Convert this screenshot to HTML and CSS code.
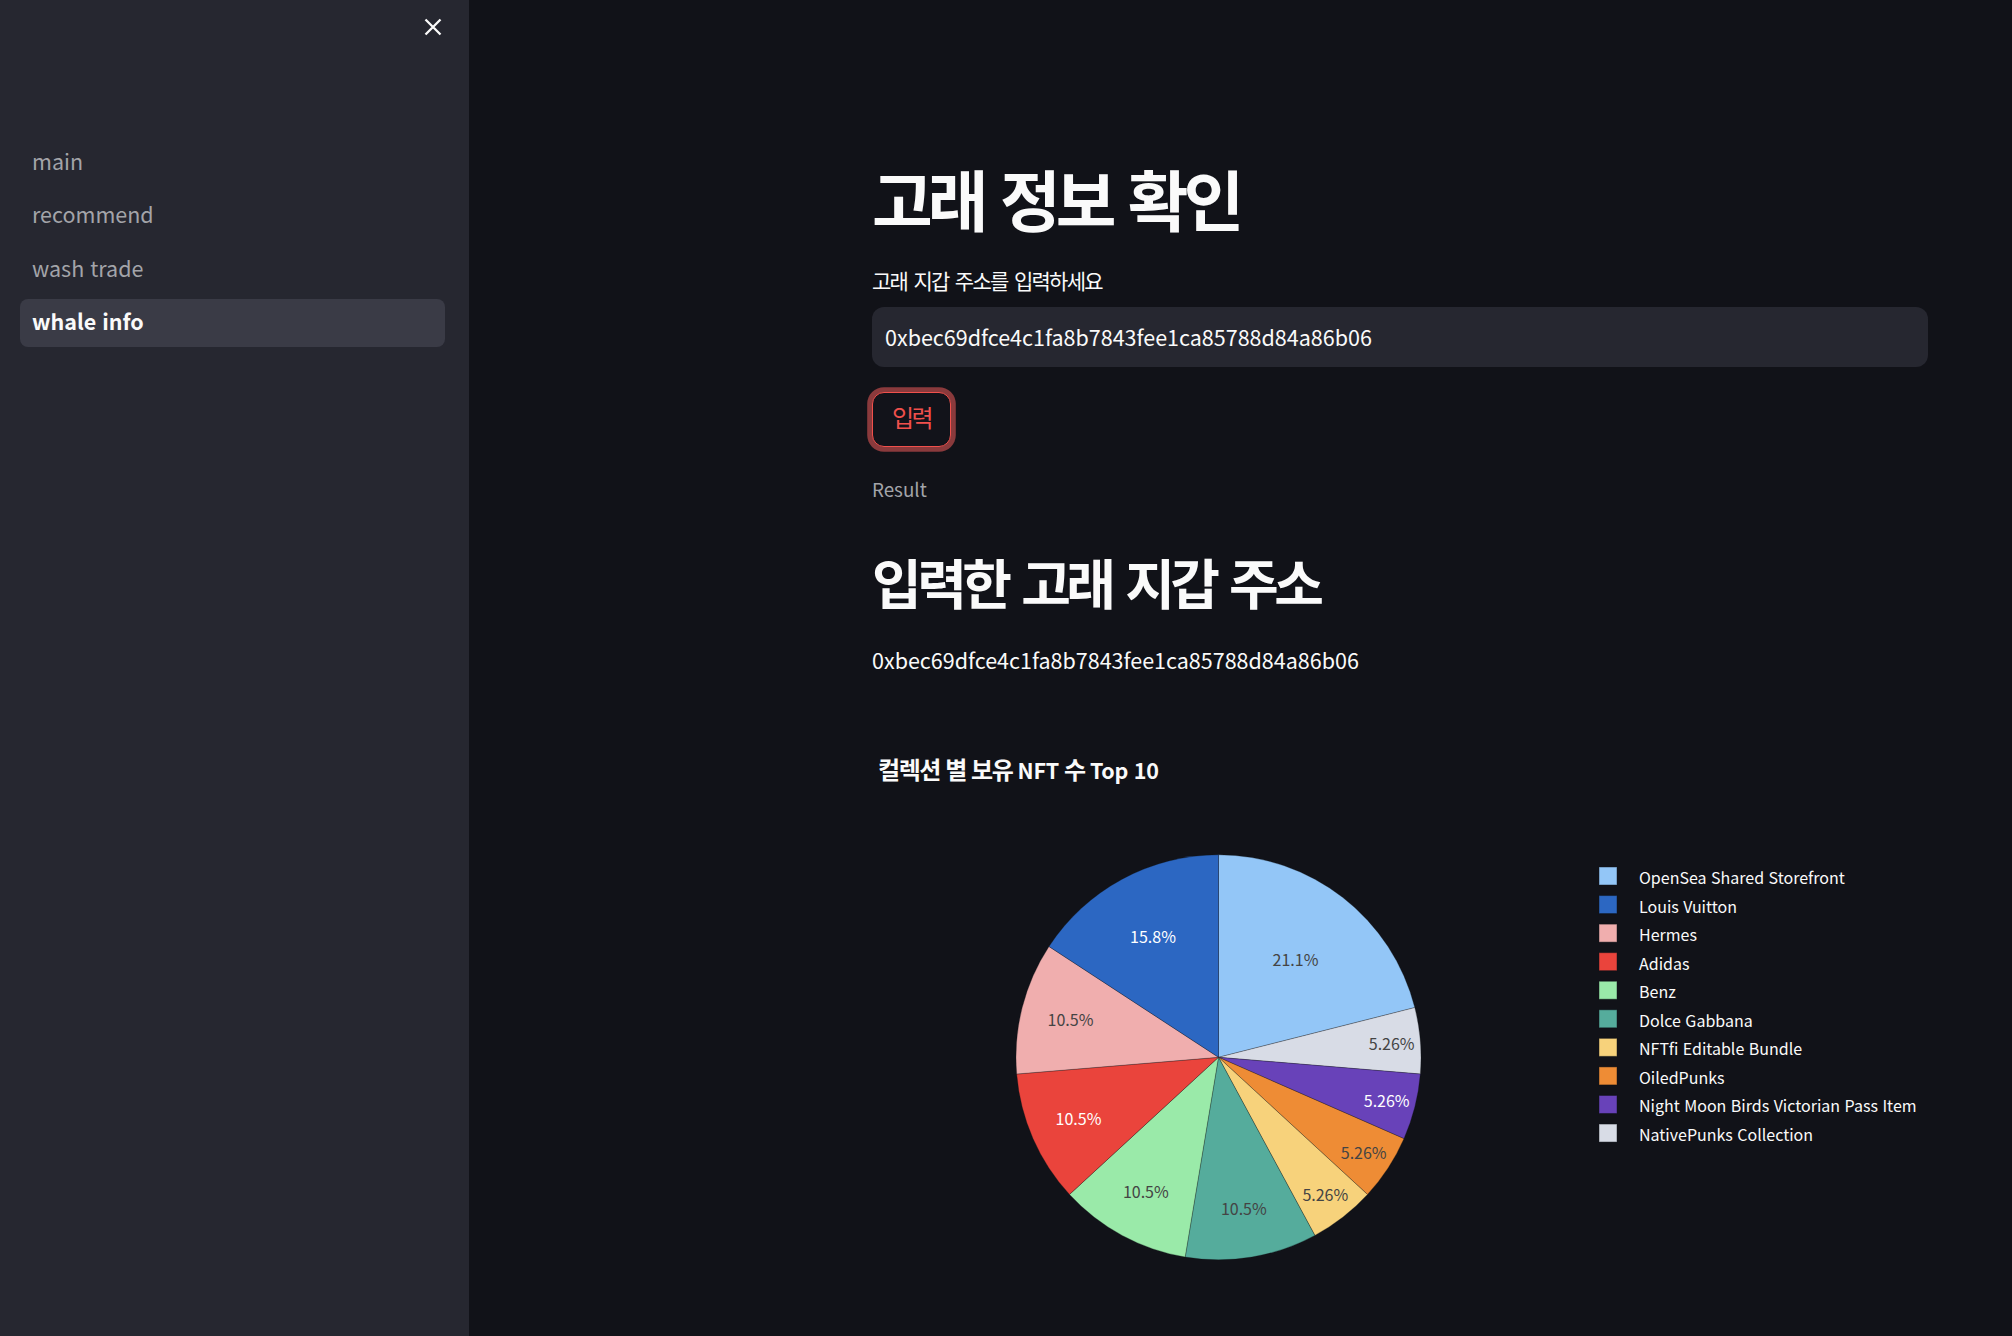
FILE: index.html
```html
<!DOCTYPE html>
<html lang="ko">
<head>
<meta charset="utf-8">
<title>whale info</title>
<link rel="stylesheet" href="styles.css">
</head>
<body>
<div class="app">
  <aside class="sidebar">
    <div class="sb-header">
      <button class="close-btn" aria-label="Close sidebar">
        <svg width="18" height="18" viewBox="0 0 18 18"><path d="M1.5 1.5 L16.5 16.5 M16.5 1.5 L1.5 16.5" stroke="#fafafa" stroke-width="2.3" fill="none"/></svg>
      </button>
    </div>
    <nav class="nav">
      <a class="nav-item">main</a>
      <a class="nav-item">recommend</a>
      <a class="nav-item">wash trade</a>
      <a class="nav-item active">whale info</a>
    </nav>
  </aside>
  <main class="main">
    <div class="block">
      <h1 class="title">고래 정보 확인</h1>
      <label class="field-label">고래 지갑 주소를 입력하세요</label>
      <div class="input-box">0xbec69dfce4c1fa8b7843fee1ca85788d84a86b06</div>
      <button class="primary-btn">입력</button>
      <p class="caption">Result</p>
      <h2 class="subtitle">입력한 고래 지갑 주소</h2>
      <p class="address">0xbec69dfce4c1fa8b7843fee1ca85788d84a86b06</p>
      <svg class="chart" width="1056" height="600" viewBox="0 0 1056 600">
        <text class="chart-title" x="6" y="39">컬렉션 별 보유 <tspan class="lat">NFT</tspan> 수 <tspan class="lat">Top 10</tspan></text>
        <g class="slices" stroke="rgba(14,17,23,0.35)" stroke-width="0.8">
          <path fill="#93c6f7" d="M346.5 317.3 L346.5 114.8 A202.5 202.5 0 0 1 542.8 267.59 Z"/>
          <path fill="#d8dce6" d="M346.5 317.3 L542.8 267.59 A202.5 202.5 0 0 1 548.31 334.02 Z"/>
          <path fill="#6842b9" d="M346.5 317.3 L548.31 334.02 A202.5 202.5 0 0 1 531.95 398.64 Z"/>
          <path fill="#ee8c35" d="M346.5 317.3 L531.95 398.64 A202.5 202.5 0 0 1 495.48 454.45 Z"/>
          <path fill="#f7d27b" d="M346.5 317.3 L495.48 454.45 A202.5 202.5 0 0 1 442.88 495.39 Z"/>
          <path fill="#55ac9c" d="M346.5 317.3 L442.88 495.39 A202.5 202.5 0 0 1 313.17 517.04 Z"/>
          <path fill="#9aeaa9" d="M346.5 317.3 L313.17 517.04 A202.5 202.5 0 0 1 197.52 454.45 Z"/>
          <path fill="#ea443c" d="M346.5 317.3 L197.52 454.45 A202.5 202.5 0 0 1 144.69 334.02 Z"/>
          <path fill="#f0aeae" d="M346.5 317.3 L144.69 334.02 A202.5 202.5 0 0 1 176.97 206.54 Z"/>
          <path fill="#2c67c2" d="M346.5 317.3 L176.97 206.54 A202.5 202.5 0 0 1 346.5 114.8 Z"/>
        </g>
        <g class="pie-labels">
          <text class="lbl-dark" x="423.5" y="225.5">21.1%</text>
          <text class="lbl-dark" x="519.7" y="309.5">5.26%</text>
          <text class="lbl-light" x="514.7" y="367">5.26%</text>
          <text class="lbl-dark" x="491.7" y="418.8">5.26%</text>
          <text class="lbl-dark" x="453.3" y="461.1">5.26%</text>
          <text class="lbl-dark" x="371.8" y="475.1">10.5%</text>
          <text class="lbl-dark" x="273.8" y="458.1">10.5%</text>
          <text class="lbl-light" x="206.5" y="385.1">10.5%</text>
          <text class="lbl-dark" x="198.5" y="286.1">10.5%</text>
          <text class="lbl-light" x="281" y="203.1">15.8%</text>
        </g>
        <g class="legend">
          <rect x="727" y="127" width="18" height="18" fill="#93c6f7"/>
          <text x="767" y="144">OpenSea Shared Storefront</text>
          <rect x="727" y="155.56" width="18" height="18" fill="#2c67c2"/>
          <text x="767" y="172.56">Louis Vuitton</text>
          <rect x="727" y="184.12" width="18" height="18" fill="#f0aeae"/>
          <text x="767" y="201.12">Hermes</text>
          <rect x="727" y="212.68" width="18" height="18" fill="#ea443c"/>
          <text x="767" y="229.68">Adidas</text>
          <rect x="727" y="241.24" width="18" height="18" fill="#9aeaa9"/>
          <text x="767" y="258.24">Benz</text>
          <rect x="727" y="269.8" width="18" height="18" fill="#55ac9c"/>
          <text x="767" y="286.8">Dolce Gabbana</text>
          <rect x="727" y="298.36" width="18" height="18" fill="#f7d27b"/>
          <text x="767" y="315.36">NFTfi Editable Bundle</text>
          <rect x="727" y="326.92" width="18" height="18" fill="#ee8c35"/>
          <text x="767" y="343.92">OiledPunks</text>
          <rect x="727" y="355.48" width="18" height="18" fill="#6842b9"/>
          <text x="767" y="372.48">Night Moon Birds Victorian Pass Item</text>
          <rect x="727" y="384.04" width="18" height="18" fill="#d8dce6"/>
          <text x="767" y="401.04">NativePunks Collection</text>
        </g>
      </svg>
    </div>
  </main>
</div>
</body>
</html>
```

FILE: styles.css
```css
* { box-sizing: border-box; }
html, body { margin: 0; padding: 0; height: 100%; overflow: hidden; }
body {
  font-family: "Noto Sans CJK KR", "Noto Sans", sans-serif;
  background: #111218;
  color: #fafafa;
}
.app { display: flex; height: 100vh; }

.sidebar {
  width: 469px;
  flex: none;
  background: #262730;
  padding: 0 24px 0 20px;
}
.sb-header {
  display: flex;
  justify-content: flex-end;
  height: 139.5px;
  padding-top: 17.7px;
  padding-right: 3.3px;
}
.close-btn {
  background: none;
  border: 0;
  padding: 0;
  width: 18px;
  height: 18px;
  display: block;
}
.close-btn svg { display: block; }
.nav { display: flex; flex-direction: column; gap: 5.6px; }
.nav-item {
  display: block;
  height: 47.7px;
  line-height: 42px;
  padding: 0.6px 12px 0;
  font-size: 21.5px;
  color: #a3a4a9;
  border-radius: 8px;
}
.nav-item.active { background: #3a3b46; color: #fafafa; font-weight: 700; }

.main { flex: 1; padding: 158.1px 0 0 403px; }
.block { width: 1056px; display: flex; flex-direction: column; align-items: flex-start; }

.title {
  margin: 0;
  font-size: 66px;
  line-height: 79.2px;
  font-weight: 700;
  letter-spacing: -5px;
  word-spacing: 3px;
}
.field-label {
  display: block;
  margin-top: 29.2px;
  font-size: 21px;
  line-height: 29.4px;
  letter-spacing: -1.7px;
  word-spacing: 2px;
}
.input-box {
  align-self: stretch;
  margin-top: 10.8px;
  height: 60px;
  background: #262730;
  border-radius: 12px;
  padding: 0 13px;
  display: flex;
  align-items: center;
  font-size: 21.5px;
}
.primary-btn {
  margin-top: 25.3px;
  width: 79px;
  height: 55px;
  border: 1.4px solid #f0504c;
  border-radius: 12px;
  background: #12131a;
  box-shadow: 0 0 0 4.8px #8a3a3c;
  color: #f0504c;
  font-family: inherit;
  font-size: 24px;
  letter-spacing: -2.6px;
  padding: 0 0 5px 0;
  display: flex;
  align-items: center;
  justify-content: center;
}
.caption {
  margin: 26.8px 0 0;
  font-size: 18.8px;
  line-height: 29.4px;
  color: #a3a4a9;
}
.subtitle {
  margin: 47px 0 0;
  font-size: 54px;
  line-height: 64.8px;
  font-weight: 700;
  letter-spacing: -4.5px;
  word-spacing: 3px;
}
.address {
  margin: 27px 0 0;
  font-size: 21.5px;
  line-height: 36px;
}
.chart { display: block; margin-top: 62px; overflow: visible; }
.chart text { font-family: "Noto Sans CJK KR", "Noto Sans", sans-serif; }
.chart-title { font-size: 24px; font-weight: 700; fill: #fafafa; letter-spacing: -1.45px; }
.chart-title .lat { font-size: 21.5px; letter-spacing: -0.3px; }
.pie-labels text { font-size: 16px; text-anchor: middle; }
.lbl-dark { fill: #444444; }
.lbl-light { fill: #ffffff; }
.legend text { font-size: 16px; fill: #fafafa; }
.legend rect { stroke: rgba(14,17,23,0.45); stroke-width: 1; }
```
